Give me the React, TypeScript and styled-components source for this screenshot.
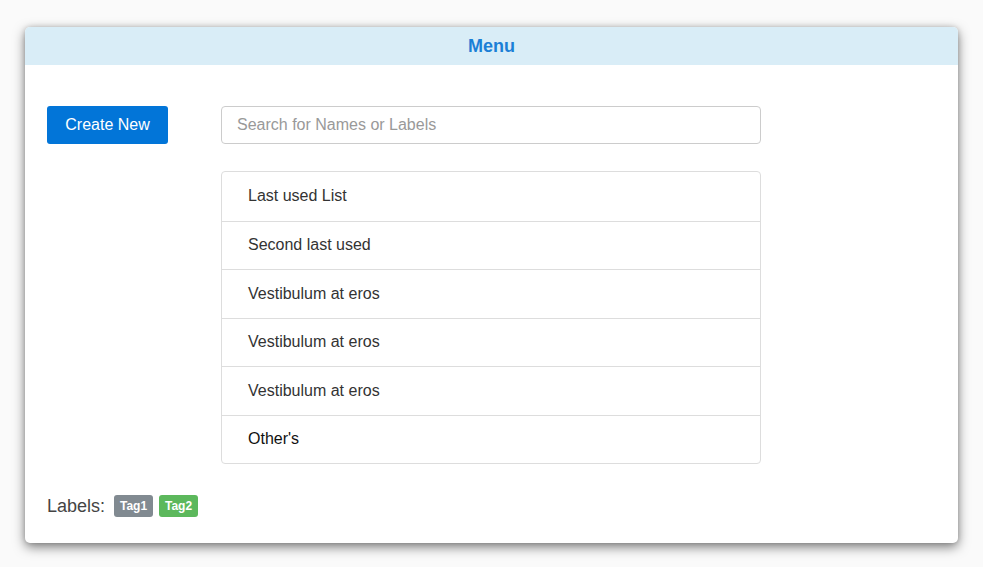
import React from "react";
import styled, { createGlobalStyle } from "styled-components";

const Global = createGlobalStyle`
  html, body { margin: 0; padding: 0; background: #fafafa; }
  body { font-family: "Liberation Sans", Arial, Helvetica, sans-serif; }
  * { box-sizing: border-box; }
`;

const Page = styled.div`
  padding: 27px 25px 24px 25px;
`;

const Card = styled.div`
  width: 933px;
  height: 516px;
  background: #fff;
  border-radius: 5px;
  overflow: hidden;
  box-shadow: 0 4px 12px rgba(0, 0, 0, 0.5), 0 0 5px rgba(0, 0, 0, 0.15);
  display: flex;
  flex-direction: column;
`;

const Header = styled.div`
  height: 38px;
  background: #d9edf7;
  display: flex;
  align-items: center;
  justify-content: center;
  font-size: 18px;
  font-weight: bold;
  color: #1b7fd6;
`;

const Body = styled.div`
  padding: 41px 22px 0 22px;
  display: flex;
  flex-direction: column;
`;

const Row = styled.div`
  display: flex;
`;

const Side = styled.div`
  width: 174px;
  flex-shrink: 0;
`;

const Main = styled.div`
  width: 540px;
  display: flex;
  flex-direction: column;
  gap: 27px;
`;

const Button = styled.button`
  height: 38px;
  width: 121px;
  background: #0275d8;
  color: #fff;
  border: none;
  border-radius: 3px;
  font-family: inherit;
  font-size: 16px;
  padding: 0;
  cursor: pointer;
`;

const Search = styled.input`
  height: 38px;
  width: 100%;
  border: 1px solid #ccc;
  border-radius: 4px;
  padding: 0 15px;
  font-family: inherit;
  font-size: 16px;
  color: #333;
  outline: none;
  &::placeholder { color: #999; }
`;

const List = styled.div`
  border: 1px solid #ddd;
  border-radius: 4px;
  display: flex;
  flex-direction: column;
`;

const Item = styled.div<{ $dark?: boolean }>`
  height: 48.5px;
  display: flex;
  align-items: center;
  padding: 0 26px;
  font-size: 16px;
  color: ${(p) => (p.$dark ? "#111" : "#333")};
  & + & { border-top: 1px solid #ddd; }
`;

const Labels = styled.div`
  margin-top: 31px;
  display: flex;
  align-items: center;
  gap: 6px;
  height: 22px;
`;

const LabelText = styled.span`
  font-size: 18px;
  color: #444;
  margin-right: 3px;
`;

const Tag = styled.span<{ $bg: string }>`
  display: inline-flex;
  align-items: center;
  justify-content: center;
  height: 22px;
  width: 39px;
  border-radius: 3px;
  background: ${(p) => p.$bg};
  color: #fff;
  font-size: 12px;
  font-weight: bold;
`;

const items = [
  "Last used List",
  "Second last used",
  "Vestibulum at eros",
  "Vestibulum at eros",
  "Vestibulum at eros",
];

export default function App() {
  return (
    <>
      <Global />
      <Page>
        <Card>
          <Header>Menu</Header>
          <Body>
            <Row>
              <Side>
                <Button>Create New</Button>
              </Side>
              <Main>
                <Search placeholder="Search for Names or Labels" />
                <List>
                  {items.map((t, i) => (
                    <Item key={i}>{t}</Item>
                  ))}
                  <Item $dark>Other's</Item>
                </List>
              </Main>
            </Row>
            <Labels>
              <LabelText>Labels:</LabelText>
              <Tag $bg="#818a91">Tag1</Tag>
              <Tag $bg="#5cb85c">Tag2</Tag>
            </Labels>
          </Body>
        </Card>
      </Page>
    </>
  );
}
